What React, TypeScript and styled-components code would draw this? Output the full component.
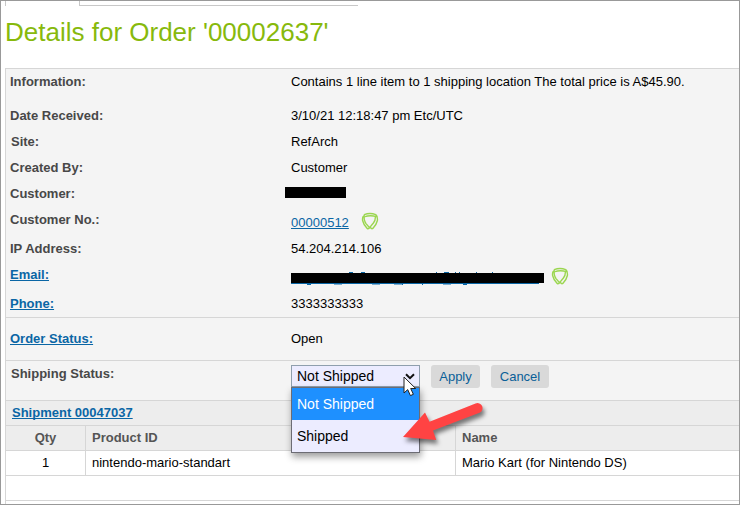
import React from 'react';
import styled, { createGlobalStyle } from 'styled-components';

const Global = createGlobalStyle`
  * { box-sizing: border-box; }
  body { margin: 0; background: #fff; font: 13px/16px "Liberation Sans", Arial, sans-serif; color: #000; }
`;
const Page = styled.main`
  width: 740px; height: 505px; border: 1px solid #999; padding-left: 4px;
  overflow: hidden; display: flex; flex-direction: column;
`;
const Tabs = styled.div`display: flex; height: 5px; flex: none;`;
const ActiveTab = styled.div`width: 74px; height: 5px; border-left: 1px solid #c8c8c8;`;
const TabRule = styled.div`width: 279px; border: solid #c8c8c8; border-width: 0 0 1px 1px;`;
const Title = styled.h1`
  margin: 0; height: 62px; flex: none; padding: 11px 0 0;
  font-size: 26px; line-height: 30px; font-weight: 400; color: #87b90c; white-space: nowrap;
`;
const Panel = styled.section`border: solid #d6d6d6; border-width: 1px 0 0 1px; flex: 1; background: #fff;`;
const Section = styled.div`background: #f4f4f4; border-bottom: 1px solid #d6d6d6;`;
const Row = styled.div<{ $h: number; $top?: number }>`
  display: grid; grid-template-columns: 285px 1fr; height: ${p => p.$h}px; padding-top: ${p => p.$top ?? 5}px;
  white-space: nowrap;
`;
const Label = styled.span<{ $indent?: number }>`
  font-weight: 700; color: #484848; padding-left: ${p => p.$indent ?? 4}px;
`;
const Link = styled.a`color: #0a66a5; text-decoration: underline; text-decoration-skip-ink: none; text-decoration-thickness: 1px; text-underline-offset: 1px;`;
const Value = styled.div<{ $shift?: number }>`
  display: flex; align-items: flex-start; margin-top: ${p => p.$shift ?? 0}px;
`;
const Redaction = styled.span`
  display: block; background: #000; width: 61px; height: 11px; margin: 1px 0 0 -6px;
`;
const EmailMask = styled.svg`display: block; width: 254px; height: 15px; margin-top: 2px;`;
const ShieldSvg = styled.svg<{ $left: number }>`width: 18px; height: 18px; margin: -3px 0 0 ${p => p.$left}px; display: block;`;
const Select = styled.div`
  position: relative; width: 129px; height: 22px; border: 1px solid #8f9fad; background: #ececff;
  font-size: 14px; line-height: 20px; padding-left: 5px;
`;
const Chevron = styled.svg`position: absolute; right: 4px; top: 7px; width: 10px; height: 7px;`;
const Menu = styled.div`
  position: absolute; z-index: 1; left: -1px; top: 21px; width: 129px; height: 66px; border: 1px solid #6c6c74;
  background: #ececff; box-shadow: 1px 4px 7px rgba(0,0,0,.38);
`;
const Option = styled.div<{ $active?: boolean }>`
  height: 32px; line-height: 32px; padding-left: 5px;
  color: ${p => p.$active ? '#fff' : '#000'}; background: ${p => p.$active ? '#1e90ff' : 'transparent'};
`;
const Button = styled.button<{ $w: number }>`
  width: ${p => p.$w}px; height: 23px; margin-left: 11px; padding: 0; border: 0; border-radius: 3px;
  background: #d9d9d9; color: #0a5f98; font: 13px "Liberation Sans", Arial, sans-serif;
`;
const Cursor = styled.svg`position: absolute; z-index: 2; left: 111px; top: 10px; width: 14px; height: 21px;`;
const Arrow = styled.svg`
  position: absolute; z-index: 3; left: 105px; top: 28px; width: 96px; height: 62px;
  filter: drop-shadow(2px 4px 2px rgba(0,0,0,.5));
`;
const ShipmentBar = styled.div`height: 25px; background: #ededed; border-bottom: 1px solid #d6d6d6; padding: 4px 0 0 6px; font-weight: 700;`;
const Items = styled.div<{ $head?: boolean }>`
  display: grid; grid-template-columns: 80px 370px 1fr; height: 25px; border-bottom: 1px solid #d6d6d6;
  background: ${p => p.$head ? '#ededed' : '#fff'}; color: ${p => p.$head ? '#555' : '#000'};
  font-weight: ${p => p.$head ? 700 : 400};
`;
const Cell = styled.div<{ $center?: boolean }>`
  border-right: ${p => p.$center ? '1px solid #d6d6d6' : '0'}; text-align: ${p => p.$center ? 'center' : 'left'};
  padding: 4px 0 0 ${p => p.$center ? 0 : 6}px;
  &:nth-child(2) { border-right: 1px solid #d6d6d6; }
`;
const Spacer = styled.div`height: 25px; border-bottom: 1px solid #d6d6d6;`;

const Shield = ({ left }: { left: number }) => (
  <ShieldSvg $left={left} viewBox="0 0 18 18" fill="none" stroke="#9bd650" strokeWidth="1.4" strokeLinejoin="round">
    <path d="M3.2 2.6Q9 .4 14.8 2.6M4 4.6Q9 3 15.6 4.6M3.2 2.6V7Q3.6 9.5 5 11.6L8.8 16M2.6 4.2Q1.2 5 1.6 8.5Q2.4 12.5 6.2 16.4Q7.4 17.4 8.6 15.6L12.4 11Q14.6 8.4 14.4 4.4M14.8 2.6Q16.8 4.2 16.4 8.5Q15.6 12.5 11.8 16.4Q10.6 17.3 9.4 15.4" />
  </ShieldSvg>
);

export default function App() {
  return <>
    <Global />
    <Page>
      <Tabs><ActiveTab /><TabRule /></Tabs>
      <Title>Details for Order '00002637'</Title>
      <Panel>
        <Section>
          <Row $h={34}><Label>Information:</Label><Value>Contains 1 line item to 1 shipping location The total price is A$45.90.</Value></Row>
          <Row $h={26}><Label>Date Received:</Label><Value>3/10/21 12:18:47 pm Etc/UTC</Value></Row>
          <Row $h={26}><Label $indent={5}>Site:</Label><Value>RefArch</Value></Row>
          <Row $h={26}><Label>Created By:</Label><Value>Customer</Value></Row>
          <Row $h={26}><Label>Customer:</Label><Value><Redaction /></Value></Row>
          <Row $h={29}><Label>Customer No.:</Label><Value $shift={3}><Link>00000512</Link><Shield left={12} /></Value></Row>
          <Row $h={26}><Label>IP Address:</Label><Value>54.204.214.106</Value></Row>
          <Row $h={29}><Label><Link>Email:</Link></Label><Value $shift={3}>
            <EmailMask viewBox="0 0 254 15">
              <path fill="none" stroke="#0a66a5" d="M0 11.5H248M58 .5h4M70 .5h4M145.5 0v2M153 .5h5M164.5 0v2M168.5 0v2M185.5 0v2M201.5 0v2M43 12h8M81 12h8M103 12h8M152 12h8M16 12.5h4M172 12.5h4M111.5 11v2M131.5 11v2" />
              <rect y="1" width="253" height="10" />
            </EmailMask><Shield left={6} />
          </Value></Row>
          <Row $h={26}><Label><Link>Phone:</Link></Label><Value>3333333333</Value></Row>
        </Section>
        <Section><Row $h={42} $top={13}><Label><Link>Order Status:</Link></Label><Value>Open</Value></Row></Section>
        <Section><Row $h={39} $top={5}><Label $indent={5}>Shipping Status:</Label><Value $shift={-1}>
          <Select>Not Shipped
            <Chevron viewBox="0 0 10 7"><path d="M1 1.3 5 5.2 9 1.3" fill="none" stroke="#111" strokeWidth="2" /></Chevron>
            <Menu><Option $active>Not Shipped</Option><Option>Shipped</Option></Menu>
            <Cursor viewBox="0 0 14 21"><path d="M1 1v16l3.7-3.4 2.7 6 3-1.3-2.7-5.8h5z" fill="#fff" stroke="#222" /></Cursor>
            <Arrow viewBox="0 0 96 62"><path d="M6 43 28 18.5l4.5 9.3L78.5 9.5a5 5 0 0 1 4 9.2L36 36.5l3.2 9.5z" fill="#ff4343" /></Arrow>
          </Select>
          <Button $w={49}>Apply</Button><Button $w={58}>Cancel</Button>
        </Value></Row></Section>
        <ShipmentBar><Link>Shipment 00047037</Link></ShipmentBar>
        <Items $head><Cell $center>Qty</Cell><Cell>Product ID</Cell><Cell>Name</Cell></Items>
        <Items><Cell $center>1</Cell><Cell>nintendo-mario-standart</Cell><Cell>Mario Kart (for Nintendo DS)</Cell></Items>
        <Spacer />
      </Panel>
    </Page>
  </>;
}
